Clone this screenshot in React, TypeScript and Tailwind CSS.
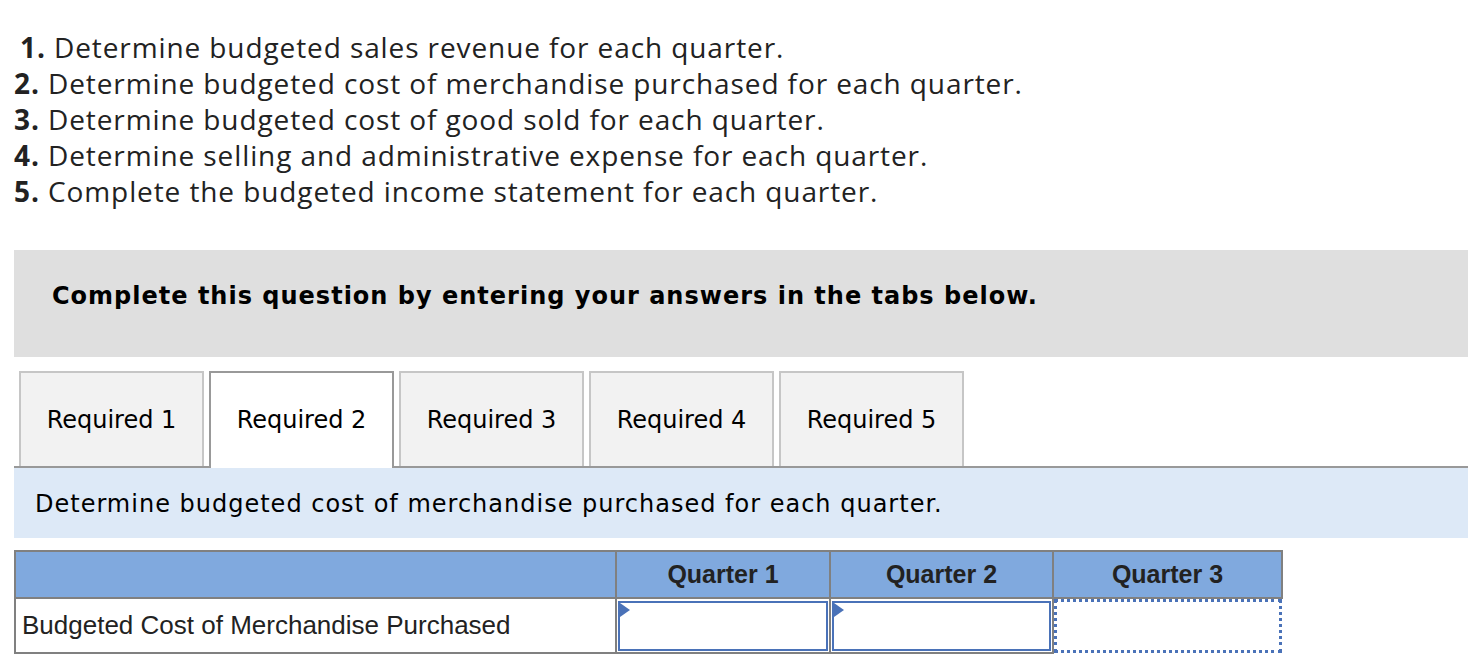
import React from 'react';

const steps = [
  'Determine budgeted sales revenue for each quarter.',
  'Determine budgeted cost of merchandise purchased for each quarter.',
  'Determine budgeted cost of good sold for each quarter.',
  'Determine selling and administrative expense for each quarter.',
  'Complete the budgeted income statement for each quarter.',
];

const tabs = ['Required 1', 'Required 2', 'Required 3', 'Required 4', 'Required 5'];

const InputCell: React.FC<{ dotted?: boolean }> = ({ dotted }) => {
  if (dotted) {
    return <div className="h-[54px] w-full border-[3px] border-dotted border-[#4a72b8]" />;
  }
  return (
    <div className="relative h-[50px] m-[1px] border-2 border-[#4a72b8] bg-white">
      {/* corner marker */}
      <div className="absolute top-0 left-0 w-0 h-0 border-l-[10px] border-l-[#4a72b8] border-y-[7px] border-y-transparent" />
    </div>
  );
};

export default function App() {
  return (
    <div className="w-full h-[670px] bg-white overflow-hidden text-[#1a1a1a]">
      {/* Numbered list */}
      <div className="pt-[29px] pl-[14px] font-['Open_Sans',sans-serif] text-[28px] leading-[36px] tracking-[0.9px] text-[#222]">
        {steps.map((s, i) => (
          <div key={i} className={i === 0 ? 'pl-[6px]' : ''}>
            <span className="font-bold">{i + 1}.</span> {s}
          </div>
        ))}
      </div>

      {/* Instruction box */}
      <div className="mt-[41px] ml-[14px] h-[107px] bg-[#dfdfdf] flex items-center pl-[38px] pb-[16px]">
        <span className="font-['DejaVu_Sans',sans-serif] font-bold text-[24px] tracking-[1px] text-black">
          Complete this question by entering your answers in the tabs below.
        </span>
      </div>

      {/* Tabs */}
      <div className="mt-[14px] ml-[14px] flex items-end gap-[5px] pl-[5px] border-b-2 border-[#999]">
        {tabs.map((t, i) => {
          const active = i === 1;
          return (
            <div
              key={t}
              className={
                active
                  ? 'w-[185px] h-[97px] -mb-[2px] bg-white border-2 border-b-0 border-[#999] flex items-center justify-center font-["DejaVu_Sans",sans-serif] text-[24px] text-black pb-[2px]'
                  : 'w-[185px] h-[95px] bg-[#f2f2f2] border-2 border-b-0 border-[#c6c6c6] flex items-center justify-center font-["DejaVu_Sans",sans-serif] text-[24px] text-black'
              }
            >
              {t}
            </div>
          );
        })}
      </div>

      {/* Prompt band */}
      <div className="ml-[14px] h-[70px] bg-[#dde9f7] flex items-center pl-[21px] pt-[2px] font-['DejaVu_Sans',sans-serif] text-[24px] tracking-[1px] text-black">
        Determine budgeted cost of merchandise purchased for each quarter.
      </div>

      {/* Answer table */}
      <div className="mt-[12px] ml-[14px]">
        <table className="border-collapse font-['Liberation_Sans',Arial,sans-serif] text-[#222]">
          <thead>
            <tr className="h-[47px] bg-[#80a9de]">
              <th className="w-[601px] border-2 border-[#808080]" />
              <th className="w-[214px] border-2 border-[#808080] text-[25px] font-bold text-center">Quarter 1</th>
              <th className="w-[223px] border-2 border-[#808080] text-[25px] font-bold text-center">Quarter 2</th>
              <th className="w-[229px] border-2 border-[#808080] text-[25px] font-bold text-center">Quarter 3</th>
            </tr>
          </thead>
          <tbody>
            <tr>
              <td className="border-2 border-[#808080] pl-[6px] text-[26px] text-left">
                Budgeted Cost of Merchandise Purchased
              </td>
              <td className="border-2 border-[#808080] p-0">
                <InputCell />
              </td>
              <td className="border-2 border-[#808080] p-0">
                <InputCell />
              </td>
              <td className="p-0">
                <InputCell dotted />
              </td>
            </tr>
          </tbody>
        </table>
      </div>
    </div>
  );
}
